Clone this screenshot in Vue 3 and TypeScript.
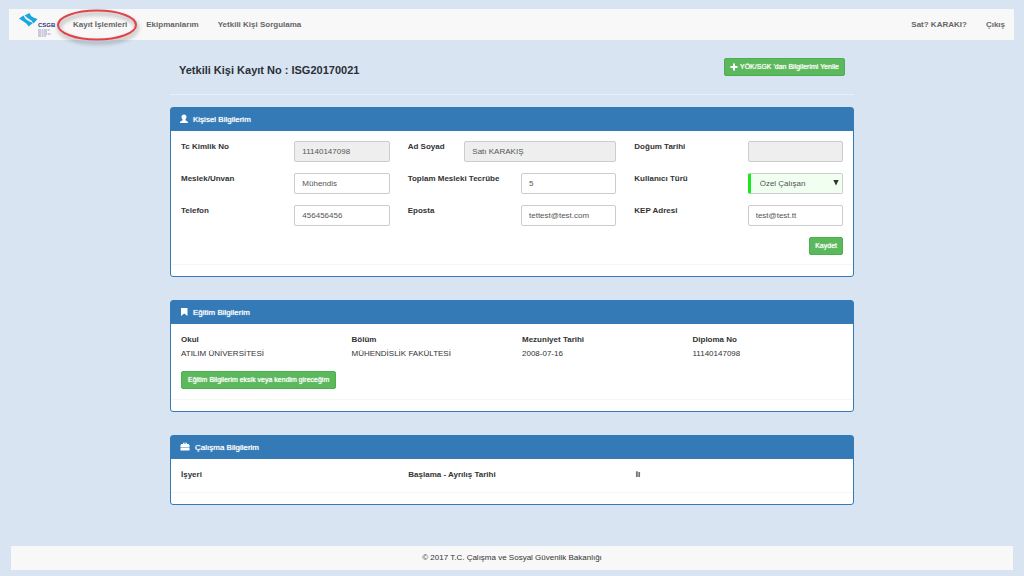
<script setup lang="ts">
import { ref } from 'vue'

interface Field {
  id: string
  label: string
  value: string
  disabled?: boolean
  wide?: boolean
  select?: boolean
}

const fields = ref<Field[]>([
  { id: 'tc', label: 'Tc Kimlik No', value: '11140147098', disabled: true },
  { id: 'name', label: 'Ad Soyad', value: 'Satı KARAKIŞ', disabled: true, wide: true },
  { id: 'birth', label: 'Doğum Tarihi', value: '', disabled: true },
  { id: 'job', label: 'Meslek/Unvan', value: 'Mühendis' },
  { id: 'experience', label: 'Toplam Mesleki Tecrübe', value: '5' },
  { id: 'type', label: 'Kullanıcı Türü', value: 'Özel Çalışan', select: true },
  { id: 'phone', label: 'Telefon', value: '456456456' },
  { id: 'mail', label: 'Eposta', value: 'tettest@test.com' },
  { id: 'kep', label: 'KEP Adresi', value: 'test@test.tt' },
])
</script>

<template>
  <div class="page">
    <nav class="navbar">
      <a class="brand" href="#" aria-label="CSGB">
        <svg width="38" height="24" viewBox="0 0 38 24">
          <path d="M0 5.500L4.500 2.500Q6 6.500 9.500 8L14 10 9.500 13.500Q7.500 10 4.500 8.500z" fill="#1ba6df" />
          <path d="M5.500 2.500L10.500 0Q11.500 3.500 14.500 4.500L18.500 6 14.500 10.500Q12.500 7 9.500 5.800z" fill="#1ba6df" />
          <path d="M5 2.500Q6.500 5.500 9.500 6.800 12.500 8 14.200 10.500" stroke="#d9f1fa" stroke-width=".7" fill="none" />
          <text x="19" y="14" class="brand-text">CSGB</text>
          <path d="M19 17h12M19 19h9M19 21h13M19 23h8" stroke="#7479a8" stroke-width=".7" stroke-dasharray="3 .6 2 .5" />
        </svg>
      </a>
      <a class="nav-link marked" href="#">
        Kayıt İşlemleri
        <svg class="ring" width="88" height="40" viewBox="0 0 88 40" aria-hidden="true">
          <ellipse cx="44" cy="20" rx="39" ry="14.500" />
        </svg>
      </a>
      <a class="nav-link" href="#">Ekipmanlarım</a>
      <a class="nav-link" href="#">Yetkili Kişi Sorgulama</a>
      <span class="spacer"></span>
      <a class="nav-link" href="#">Sat? KARAKI?</a>
      <a class="nav-link" href="#">Çıkış</a>
    </nav>

    <main class="content">
      <header class="title-row">
        <h1>Yetkili Kişi Kayıt No : ISG20170021</h1>
        <button type="button" class="btn">
          <svg width="8" height="8" viewBox="0 0 8 8"><path d="M3 0.500h2V3h2.500v2H5v2.500H3V5H.5V3H3z" fill="#fff" /></svg>
          YÖK/SGK 'dan Bilgilerimi Yenile
        </button>
      </header>

      <section class="panel">
        <h2>
          <svg class="raised" width="8" height="10" viewBox="0 0 8 10"><path d="M4 .5c1.700 0 2.500 1 2.500 2.500C6.500 4.300 5.900 5 5.400 5.500v.8C6.500 6.900 8 7.300 8 8.500V9H0v-.5c0-1.200 1.500-1.600 2.600-2.200v-.8C2.100 5 1.500 4.300 1.500 3 1.500 1.500 2.300.5 4 .5z" fill="#fff" /></svg>
          Kişisel Bilgilerim
        </h2>
        <form class="grid form" @submit.prevent>
          <template v-for="f in fields" :key="f.id">
            <label :for="f.id" :class="{ short: f.wide }">{{ f.label }}</label>
            <div v-if="f.select" class="select">
              <select :id="f.id" v-model="f.value">
                <option>Özel Çalışan</option>
              </select>
              <svg width="6" height="6" viewBox="0 0 6 6"><path d="M.3 0h5.400L3 5.500z" fill="#333" /></svg>
            </div>
            <input v-else :id="f.id" v-model="f.value" type="text" :disabled="f.disabled" :class="{ wide: f.wide }" />
          </template>
          <div class="actions"><button type="submit" class="btn">Kaydet</button></div>
        </form>
      </section>

      <section class="panel">
        <h2>
          <svg class="raised" width="8" height="10" viewBox="0 0 8 10"><path d="M1 1h6.500v8L4.250 6.500 1 9z" fill="#fff" /></svg>
          Eğitim Bilgilerim
        </h2>
        <table class="quarters">
          <thead>
            <tr><th>Okul</th><th>Bölüm</th><th>Mezuniyet Tarihi</th><th>Diploma No</th></tr>
          </thead>
          <tbody>
            <tr><td>ATILIM ÜNİVERSİTESİ</td><td>MÜHENDİSLİK FAKÜLTESİ</td><td>2008-07-16</td><td>11140147098</td></tr>
          </tbody>
        </table>
        <div class="add-row"><button type="button" class="btn">Eğitim Bilgilerim eksik veya kendim gireceğim</button></div>
      </section>

      <section class="panel">
        <h2>
          <svg class="raised" width="10" height="10" viewBox="0 0 10 10"><path d="M3 2V.8h4V2h1.500l1 1v2.500h-9V3l1-1zM3.800 2h2.400v-.5H3.800zM.5 6h9v2.500h-9z" fill="#fff" /></svg>
          Çalışma Bilgilerim
        </h2>
        <table class="work">
          <thead>
            <tr><th>İşyeri</th><th>Başlama - Ayrılış Tarihi</th><th>İl</th></tr>
          </thead>
        </table>
      </section>
    </main>

    <footer class="footer">© 2017 T.C. Çalışma ve Sosyal Güvenlik Bakanlığı</footer>
  </div>
</template>

<style>
body {
  margin: 0;
  background: #d8e4f2;
}
</style>

<style scoped>
.page {
  min-height: 100vh;
  box-sizing: border-box;
  display: flex;
  flex-direction: column;
  padding: 9px 10px 6px 9px;
  font: 8px/12px "Liberation Sans", Arial, sans-serif;
  color: #333;
}
.navbar {
  display: flex;
  align-items: center;
  gap: 19px;
  height: 31px;
  padding: 0 9px 0 10px;
  background: #f8f8f8;
}
.brand {
  display: flex;
  margin-right: -3px;
}
.brand-text {
  font: bold 6px "Liberation Sans", Arial, sans-serif;
  fill: #2c3278;
}
.nav-link {
  color: #666;
  font-weight: bold;
  text-decoration: none;
  white-space: nowrap;
}
.marked {
  position: relative;
}
.ring {
  position: absolute;
  left: 50%;
  top: 50%;
  transform: translate(-50%, -50%);
  margin-left: -3px;
  overflow: visible;
  pointer-events: none;
}
.ring ellipse {
  fill: none;
  stroke: #e04349;
  stroke-width: 2;
  filter: drop-shadow(1px 3px 2px rgba(0, 0, 0, 0.4));
}
.spacer {
  flex: 1;
}
.content {
  padding: 0 160px 0 161px;
}
.title-row {
  display: flex;
  align-items: flex-start;
  justify-content: space-between;
  height: 36px;
  padding: 18px 9px 0;
  margin-bottom: 12px;
  border-bottom: 1px solid #e8eef5;
}
h1 {
  margin: 0;
  padding-top: 4px;
  font-size: 11px;
  line-height: 16px;
  color: #2b2f36;
}
.btn {
  display: inline-flex;
  align-items: center;
  gap: 2px;
  height: 18px;
  padding: 0 5px;
  border: 1px solid #4cae4c;
  border-radius: 2px;
  background: #5cb85c;
  color: #fff;
  font: 7px/10px "Liberation Sans", Arial, sans-serif;
  text-shadow: 0 0 1px #fff;
  white-space: nowrap;
}
.panel {
  margin-bottom: 23px;
  padding-bottom: 11px;
  border: 1px solid #337ab7;
  border-radius: 3px;
  background: #fff;
}
h2 {
  display: flex;
  align-items: center;
  gap: 5px;
  height: 23px;
  margin: 0;
  padding: 0 9px;
  background: #337ab7;
  color: #fff;
  font-size: 8px;
  font-weight: normal;
  line-height: 12px;
  text-shadow: 0 0 1px #fff;
}
.raised {
  margin-bottom: 2px;
}
.grid {
  display: grid;
  grid-template-columns: repeat(12, minmax(0, 1fr));
  gap: 11px 18px;
}
.form {
  padding: 10px 10px 9px;
  border-bottom: 1px solid #f5f5f5;
}
label {
  grid-column: span 2;
  font-weight: bold;
  white-space: nowrap;
}
.short {
  grid-column: span 1;
}
input,
.select {
  grid-column: span 2;
  min-width: 0;
}
input.wide {
  grid-column: span 3;
}
input,
select {
  width: 100%;
  height: 21px;
  box-sizing: border-box;
  padding: 0 7px;
  border: 1px solid #ccc;
  border-radius: 2px;
  background: #fff;
  color: #555;
  font: 8px/12px "Liberation Sans", Arial, sans-serif;
}
input:disabled {
  background: #eee;
}
.select {
  position: relative;
  display: flex;
}
select {
  appearance: none;
  padding: 0 9px;
  border-left: 3px solid #1be81b;
  background: #f0fff0;
}
.select svg {
  position: absolute;
  right: 4px;
  top: 7px;
  pointer-events: none;
}
.actions {
  grid-column: 1 / -1;
  display: flex;
  justify-content: flex-end;
}
table {
  width: 100%;
  table-layout: fixed;
  border-collapse: collapse;
}
th,
td {
  padding: 1px 0 1px 10px;
  text-align: left;
}
thead th {
  padding-top: 10px;
}
.add-row {
  padding: 10px;
  border-bottom: 1px solid #f5f5f5;
}
.add-row .btn {
  display: flex;
  padding: 0 6px;
}
.work {
  border-bottom: 1px solid #f5f5f5;
}
.work th {
  padding-bottom: 11px;
}
.footer {
  margin: auto 1px 0 2px;
  background: #f8f8f8;
  text-align: center;
  line-height: 24px;
}
</style>
